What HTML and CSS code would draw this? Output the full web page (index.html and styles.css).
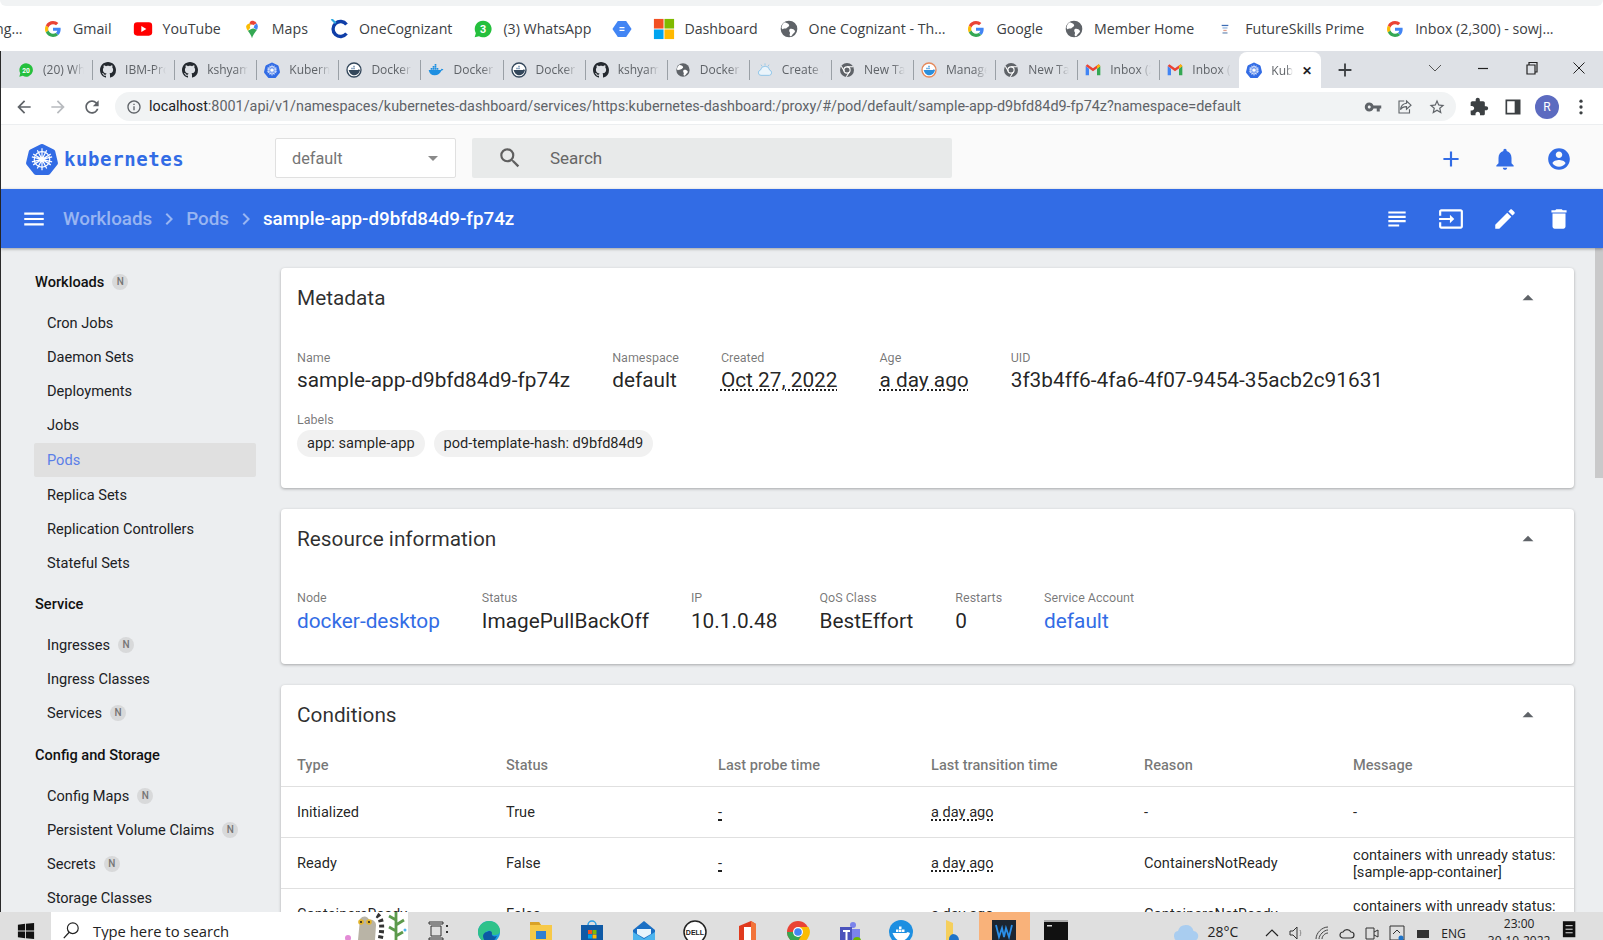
FILE: index.html
```html
<!DOCTYPE html>
<html lang="en">
<head>
    <meta charset="UTF-8">
    <meta name="viewport" content="width=device-width, initial-scale=1.0">
    <title>sample-app-d9bfd84d9-fp74z - Kubernetes Dashboard</title>
    <link rel="stylesheet" href="styles.css">
</head>
<body>
    <!-- shared icons -->
    <svg class="defs" aria-hidden="true">
        <symbol id="i-g" viewBox="0 0 48 48">
            <path fill="#EA4335" d="M24 9.5c3.54 0 6.71 1.22 9.21 3.6l6.85-6.85C35.9 2.38 30.47 0 24 0 14.62 0 6.51 5.38 2.56 13.22l7.98 6.19C12.43 13.72 17.74 9.5 24 9.5z"/>
            <path fill="#4285F4" d="M46.98 24.55c0-1.57-.15-3.09-.38-4.55H24v9.02h12.94c-.58 2.96-2.26 5.48-4.78 7.18l7.73 6c4.51-4.18 7.09-10.36 7.09-17.65z"/>
            <path fill="#FBBC05" d="M10.53 28.59c-.48-1.45-.76-2.99-.76-4.59s.27-3.14.76-4.59l-7.98-6.19C.92 16.46 0 20.12 0 24c0 3.88.92 7.54 2.56 10.78l7.97-6.19z"/>
            <path fill="#34A853" d="M24 48c6.48 0 11.93-2.13 15.89-5.81l-7.73-6c-2.15 1.45-4.92 2.3-8.16 2.3-6.26 0-11.57-4.22-13.47-9.91l-7.98 6.19C6.51 42.62 14.62 48 24 48z"/>
        </symbol>
        <symbol id="i-yt" viewBox="0 0 24 24">
            <rect x="1" y="4" width="22" height="16" rx="4" fill="#f00"/>
            <path fill="#fff" d="M10 8.5v7l6-3.5z"/>
        </symbol>
        <symbol id="i-maps" viewBox="0 0 24 24">
            <path fill="#34a853" d="M12 23c-1-4-3-6-5-9l6-3 5 2c-2 3-5 6-6 10z"/>
            <path fill="#fbbc04" d="M5 9c0 2 1 3.5 2 5l5-6-3-3C7 6 5 7 5 9z"/>
            <path fill="#4285f4" d="M19 9c0-1.5-.5-2.8-1.5-4L13 10l5 3c.6-1.2 1-2.5 1-4z"/>
            <path fill="#ea4335" d="M9 5l3.5 3 5-3C16.3 3 14.5 2 12 2 10.5 2 9.500 3.500 9 5z"/>
            <circle cx="12" cy="9" r="2.5" fill="#fff"/>
        </symbol>
        <symbol id="i-cog" viewBox="0 0 24 24">
            <path fill="none" stroke="#0f3ea8" stroke-width="4" d="M21 6.500a9 9 0 1 0 0 11"/>
            <path fill="none" stroke="#2ea8e0" stroke-width="2.500" d="M3 0l5 5"/>
        </symbol>
        <symbol id="i-wa" viewBox="0 0 24 24">
            <path fill="#25c03d" d="M12 2a10 10 0 0 0-8.600 15L2 22l5.200-1.400A10 10 0 1 0 12 2z"/>
        </symbol>
        <symbol id="i-hex" viewBox="0 0 24 24">
            <path fill="#4285f4" d="M7 2.500h10l6.500 9.500-6.500 9.500H7L.5 12z"/>
            <path fill="#fff" d="M9 9.500h6V11H9zM9 13h6v1.500H9z"/>
        </symbol>
        <symbol id="i-ms" viewBox="0 0 24 24">
            <path fill="#f25022" d="M1 1h10.500v10.500H1z"/>
            <path fill="#7fba00" d="M12.500 1H23v10.500H12.500z"/>
            <path fill="#00a4ef" d="M1 12.500h10.500V23H1z"/>
            <path fill="#ffb900" d="M12.500 12.500H23V23H12.500z"/>
        </symbol>
        <symbol id="i-globe" viewBox="0 0 24 24">
            <circle cx="12" cy="12" r="10" fill="#5f6368"/>
            <path fill="#fff" d="M7 4c2 1 4 1 5 3s-2 3-3 4-3 0-4 1-2-1-2-2c.5-2.500 2-5 4-6zM13 12c2-1 5 0 6 2s-2 3-3 5-2 2-3 1 1-3 0-4-1-3 0-4z"/>
        </symbol>
        <symbol id="i-fs" viewBox="0 0 24 24">
            <path fill="#3d6db5" d="M8 7h8v1.500H8z"/>
            <path fill="#8fb4de" d="M9 10h6v1.500H9z"/>
            <path fill="#e2a08e" d="M10 13h4v1.500h-4z"/>
            <path fill="#6f8fb7" d="M9 16h6v1.500H9z"/>
        </symbol>
        <symbol id="i-gh" viewBox="0 0 16 16">
            <path fill="#24292f" d="M8 0C3.58 0 0 3.58 0 8c0 3.54 2.29 6.53 5.47 7.59.4.07.55-.17.55-.38 0-.19-.01-.82-.01-1.49-2.01.37-2.53-.49-2.69-.94-.09-.23-.48-.94-.82-1.13-.28-.15-.68-.52-.01-.53.63-.01 1.08.58 1.23.82.72 1.21 1.87.87 2.33.66.07-.52.28-.87.51-1.07-1.78-.2-3.64-.89-3.64-3.95 0-.87.31-1.59.82-2.15-.08-.2-.36-1.02.08-2.12 0 0 .67-.21 2.2.82.64-.18 1.32-.27 2-.27.68 0 1.36.09 2 .27 1.53-1.04 2.2-.82 2.2-.82.44 1.1.16 1.92.08 2.12.51.56.82 1.27.82 2.15 0 3.07-1.87 3.75-3.65 3.95.29.25.54.73.54 1.48 0 1.07-.01 1.93-.01 2.2 0 .21.15.46.55.38A8.013 8.013 0 0016 8c0-4.42-3.58-8-8-8z"/>
        </symbol>
        <symbol id="i-k8s" viewBox="0 0 24 24">
            <path fill="#326ce5" d="M12 .8a2 2 0 0 1 .9.2l7.9 3.800a2 2 0 0 1 1.100 1.400l2 8.500a2 2 0 0 1-.4 1.700l-5.500 6.800a2 2 0 0 1-1.600.8H7.600a2 2 0 0 1-1.600-.8L.5 16.400a2 2 0 0 1-.4-1.700l2-8.500a2 2 0 0 1 1.100-1.400L11.100 1a2 2 0 0 1 .9-.2z"/>
            <g fill="none" stroke="#fff" stroke-width=".9">
                <circle cx="12" cy="12.300" r="5.800"/>
                <circle cx="12" cy="12.300" r="1.400" fill="#fff"/>
                <path d="M12 4v16.500M5.400 8.200l13.200 8.200M18.600 8.200L5.400 16.400M4.400 14.200l15.200-3.800M19.600 14.200L4.400 10.400M8.500 19.200l7-13.800M15.500 19.200l-7-13.800"/>
            </g>
        </symbol>
        <symbol id="i-whale" viewBox="0 0 24 24">
            <path fill="#1d8fe1" d="M1 12h17c1 0 2-1 2-2 1 0 2 .5 3 1-.5 1.500-2 2-3 2-1.500 4-5 7-10 7-5 0-8-3-9-8z"/>
            <path fill="#1d8fe1" d="M4 9h2.500v2.500H4zM7 9h2.500v2.500H7zM10 9h2.500v2.500H10zM13 9h2.500v2.500H13zM7 6h2.500v2.500H7zM10 6h2.500v2.500H10zM10 3h2.500v2.500H10z"/>
        </symbol>
        <symbol id="i-dockround" viewBox="0 0 24 24">
            <circle cx="12" cy="12" r="10.500" fill="#fff" stroke="#33475b" stroke-width="2"/>
            <path fill="#33475b" d="M4 12h14c.8 0 1-1 1-1l2 1c-1 5-5 8-9 8-4 0-7-4-8-8z"/>
            <path fill="#5b7fa5" d="M8 8.500h2V11H8zM11 8.500h2V11h-2zM11 5.500h2V8h-2z"/>
        </symbol>
        <symbol id="i-cloudy" viewBox="0 0 24 24">
            <path fill="#eaf4fb" stroke="#8cc4e8" stroke-width="1.400" d="M6 20a4 4 0 0 1-.8-7.900A7 7 0 0 1 19 12.200 4 4 0 0 1 18.500 20z"/>
            <path fill="none" stroke="#8cc4e8" stroke-width="1.200" d="M12 2v3M6 4l1.500 2.500M18 4l-1.500 2.500"/>
        </symbol>
        <symbol id="i-chrome" viewBox="0 0 24 24">
            <circle cx="12" cy="12" r="10.500" fill="#5f6368"/>
            <circle cx="12" cy="12" r="5.500" fill="#fff"/>
            <circle cx="12" cy="12" r="3.800" fill="#5f6368"/>
            <path stroke="#fff" stroke-width="1.600" d="M12 7h9M8 14L3.500 6.500M15.500 15L11 22"/>
        </symbol>
        <symbol id="i-manage" viewBox="0 0 24 24">
            <circle cx="12" cy="12" r="10.500" fill="#fff" stroke="#e58a5c" stroke-width="2"/>
            <path fill="#2a8fdd" d="M4 12h14c.8 0 1-1 1-1l2 1c-1 5-5 8-9 8-4 0-7-4-8-8z"/>
            <path fill="#2a8fdd" d="M8 8.500h2V11H8zM11 8.500h2V11h-2zM11 5.500h2V8h-2z"/>
        </symbol>
        <symbol id="i-gmail" viewBox="0 0 24 24">
            <path fill="#4285f4" d="M1 6v14h5V10z"/>
            <path fill="#34a853" d="M18 10v10h5V6z"/>
            <path fill="#ea4335" d="M1 6l11 8 11-8-2.500-2.500L12 9.500 3.500 3.500z"/>
            <path fill="#fbbc04" d="M20.500 3.500L23 6l-5 4V6z"/>
        </symbol>
        <symbol id="m-search" viewBox="0 0 24 24"><path d="M15.5 14h-.79l-.28-.27A6.471 6.471 0 0 0 16 9.5 6.500 6.500 0 1 0 9.500 16c1.610 0 3.090-.59 4.230-1.570l.27.28v.79l5 4.990L20.490 19l-4.990-5zm-6 0C7.010 14 5 11.990 5 9.500S7.010 5 9.500 5 14 7.010 14 9.500 11.990 14 9.500 14z"/></symbol>
        <symbol id="m-add" viewBox="0 0 24 24"><path d="M19 13h-6v6h-2v-6H5v-2h6V5h2v6h6v2z"/></symbol>
        <symbol id="m-bell" viewBox="0 0 24 24"><path d="M12 22c1.100 0 2-.9 2-2h-4c0 1.100.89 2 2 2zm6-6v-5c0-3.070-1.640-5.640-4.500-6.320V4c0-.83-.67-1.500-1.500-1.500s-1.500.67-1.500 1.500v.68C7.630 5.360 6 7.920 6 11v5l-2 2v1h16v-1l-2-2z"/></symbol>
        <symbol id="m-account" viewBox="0 0 24 24"><path d="M12 2C6.480 2 2 6.480 2 12s4.480 10 10 10 10-4.480 10-10S17.520 2 12 2zm0 3c1.660 0 3 1.340 3 3s-1.340 3-3 3-3-1.340-3-3 1.340-3 3-3zm0 14.200c-2.500 0-4.710-1.280-6-3.220.03-1.990 4-3.080 6-3.080 1.990 0 5.970 1.090 6 3.080-1.290 1.940-3.500 3.220-6 3.220z"/></symbol>
        <symbol id="m-menu" viewBox="0 0 24 24"><path d="M3 18h18v-2H3v2zm0-5h18v-2H3v2zm0-7v2h18V6H3z"/></symbol>
        <symbol id="m-chevron" viewBox="0 0 24 24"><path d="M10 6L8.590 7.410 13.170 12l-4.580 4.590L10 18l6-6z"/></symbol>
        <symbol id="m-logs" viewBox="0 0 24 24"><path d="M14 17H4v2h10v-2zm6-8H4v2h16V9zM4 15h16v-2H4v2zM4 5v2h16V5H4z"/></symbol>
        <symbol id="m-exec" viewBox="0 0 24 24"><path d="M21 3.010H3c-1.100 0-2 .9-2 2V9h2V4.990h18v14.030H3V15H1v4.010c0 1.100.9 1.980 2 1.980h18c1.100 0 2-.88 2-1.980v-14c0-1.110-.9-2-2-2zM11 16l4-4-4-4v3H1v2h10v3z"/></symbol>
        <symbol id="m-edit" viewBox="0 0 24 24"><path d="M3 17.250V21h3.750L17.810 9.940l-3.750-3.750L3 17.250zM20.710 7.040c.39-.39.39-1.020 0-1.410l-2.340-2.340c-.39-.39-1.020-.39-1.410 0l-1.830 1.830 3.750 3.750 1.830-1.830z"/></symbol>
        <symbol id="m-delete" viewBox="0 0 24 24"><path d="M6 19c0 1.100.9 2 2 2h8c1.100 0 2-.9 2-2V7H6v12zM19 4h-3.500l-1-1h-5l-1 1H5v2h14V4z"/></symbol>
        <symbol id="m-up" viewBox="0 0 24 24"><path d="M7 14l5-5 5 5z"/></symbol>
        <symbol id="m-down" viewBox="0 0 24 24"><path d="M7 10l5 5 5-5z"/></symbol>
        <symbol id="m-back" viewBox="0 0 24 24"><path d="M20 11H7.830l5.590-5.590L12 4l-8 8 8 8 1.410-1.410L7.830 13H20v-2z"/></symbol>
        <symbol id="m-forward" viewBox="0 0 24 24"><path d="M12 4l-1.410 1.410L16.170 11H4v2h12.170l-5.580 5.590L12 20l8-8z"/></symbol>
        <symbol id="m-reload" viewBox="0 0 24 24"><path d="M17.650 6.350C16.200 4.900 14.350 4 12 4c-4.420 0-7.990 3.580-7.990 8s3.570 8 7.990 8c3.730 0 6.840-2.550 7.730-6h-2.080c-.82 2.330-3.040 4-5.650 4-3.310 0-6-2.690-6-6s2.690-6 6-6c1.660 0 3.140.69 4.220 1.780L13 11h7V4l-2.350 2.350z"/></symbol>
        <symbol id="m-info" viewBox="0 0 24 24"><path d="M11 7h2v2h-2zm0 4h2v6h-2zm1-9C6.480 2 2 6.480 2 12s4.480 10 10 10 10-4.480 10-10S17.520 2 12 2zm0 18c-4.410 0-8-3.590-8-8s3.590-8 8-8 8 3.590 8 8-3.590 8-8 8z"/></symbol>
        <symbol id="m-key" viewBox="0 0 24 24"><path d="M12.650 10C11.830 7.670 9.610 6 7 6c-3.310 0-6 2.690-6 6s2.690 6 6 6c2.610 0 4.830-1.670 5.650-4H17v4h4v-4h2v-4H12.650zM7 14c-1.100 0-2-.9-2-2s.9-2 2-2 2 .9 2 2-.9 2-2 2z"/></symbol>
        <symbol id="m-star" viewBox="0 0 24 24"><path d="M22 9.240l-7.190-.62L12 2 9.190 8.630 2 9.240l5.460 4.730L5.820 21 12 17.270 18.180 21l-1.630-7.030L22 9.240zM12 15.400l-3.760 2.270 1-4.280-3.320-2.880 4.380-.38L12 6.100l1.710 4.040 4.380.38-3.320 2.880 1 4.280L12 15.400z"/></symbol>
        <symbol id="m-ext" viewBox="0 0 24 24"><path d="M20.500 11H19V7c0-1.100-.9-2-2-2h-4V3.500C13 2.120 11.880 1 10.500 1S8 2.120 8 3.500V5H4c-1.100 0-1.990.9-1.990 2v3.800H3.500c1.490 0 2.700 1.210 2.700 2.700s-1.210 2.700-2.700 2.700H2V20c0 1.100.9 2 2 2h3.800v-1.500c0-1.490 1.210-2.700 2.700-2.700 1.490 0 2.700 1.210 2.700 2.700V22H17c1.100 0 2-.9 2-2v-4h1.500c1.380 0 2.500-1.120 2.500-2.500S21.880 11 20.500 11z"/></symbol>
        <symbol id="m-share" viewBox="0 0 24 24"><path fill="none" stroke="currentColor" stroke-width="1.500" d="M14 4l6 5.500-6 5.500v-3.500c-4 0-6.500 1.500-8 4 .5-4.500 3-8 8-8.500zM11 4H4v16h14v-5"/></symbol>
        <symbol id="m-panel" viewBox="0 0 24 24"><path d="M3 3h18v18H3zm2 2v14h9V5z" fill-rule="evenodd"/></symbol>
        <symbol id="m-dots" viewBox="0 0 24 24"><circle cx="12" cy="5" r="2"/><circle cx="12" cy="12" r="2"/><circle cx="12" cy="19" r="2"/></symbol>
    </svg>

    <div class="top-strip"><div class="top-strip-round"></div></div>

    <div class="bookmarks">
        <span class="bm-cut">ng...</span>
        <a class="bm"><svg class="bm-icon bm-g"><use href="#i-g"/></svg>Gmail</a>
        <a class="bm"><svg class="bm-icon"><use href="#i-yt"/></svg>YouTube</a>
        <a class="bm"><svg class="bm-icon"><use href="#i-maps"/></svg>Maps</a>
        <a class="bm"><svg class="bm-icon"><use href="#i-cog"/></svg>OneCognizant</a>
        <a class="bm"><svg class="bm-icon" viewBox="0 0 24 24"><use href="#i-wa"/><text class="icon-num" x="12" y="17" font-size="13">3</text></svg>(3) WhatsApp</a>
        <a class="bm bm-empty"><svg class="bm-icon"><use href="#i-hex"/></svg></a>
        <a class="bm"><svg class="bm-icon bm-ms"><use href="#i-ms"/></svg>Dashboard</a>
        <a class="bm"><svg class="bm-icon"><use href="#i-globe"/></svg>One Cognizant - Th...</a>
        <a class="bm"><svg class="bm-icon bm-g"><use href="#i-g"/></svg>Google</a>
        <a class="bm"><svg class="bm-icon"><use href="#i-globe"/></svg>Member Home</a>
        <a class="bm"><svg class="bm-icon"><use href="#i-fs"/></svg>FutureSkills Prime</a>
        <a class="bm"><svg class="bm-icon bm-g"><use href="#i-g"/></svg>Inbox (2,300) - sowj...</a>
    </div>

    <div class="window">
        <div class="tabstrip">
            <div class="tab"><svg class="tab-icon" viewBox="0 0 24 24"><use href="#i-wa"/><text class="icon-num" x="12" y="16" font-size="10">20</text></svg><span class="tab-text">(20) WhatsApp</span></div>
            <div class="tab"><svg class="tab-icon"><use href="#i-gh"/></svg><span class="tab-text">IBM-Project</span></div>
            <div class="tab"><svg class="tab-icon"><use href="#i-gh"/></svg><span class="tab-text">kshyamsundar</span></div>
            <div class="tab"><svg class="tab-icon"><use href="#i-k8s"/></svg><span class="tab-text">Kubernetes</span></div>
            <div class="tab"><svg class="tab-icon"><use href="#i-dockround"/></svg><span class="tab-text">Docker Hub</span></div>
            <div class="tab"><svg class="tab-icon"><use href="#i-whale"/></svg><span class="tab-text">Docker Hub</span></div>
            <div class="tab"><svg class="tab-icon"><use href="#i-dockround"/></svg><span class="tab-text">Docker Hub</span></div>
            <div class="tab"><svg class="tab-icon"><use href="#i-gh"/></svg><span class="tab-text">kshyamsundar</span></div>
            <div class="tab"><svg class="tab-icon"><use href="#i-globe"/></svg><span class="tab-text">Docker Hub</span></div>
            <div class="tab"><svg class="tab-icon"><use href="#i-cloudy"/></svg><span class="tab-text">Create a</span></div>
            <div class="tab"><svg class="tab-icon"><use href="#i-chrome"/></svg><span class="tab-text">New Tab</span></div>
            <div class="tab"><svg class="tab-icon"><use href="#i-manage"/></svg><span class="tab-text">Manage</span></div>
            <div class="tab"><svg class="tab-icon"><use href="#i-chrome"/></svg><span class="tab-text">New Tab</span></div>
            <div class="tab"><svg class="tab-icon"><use href="#i-gmail"/></svg><span class="tab-text">Inbox (2,300)</span></div>
            <div class="tab tab-last"><svg class="tab-icon"><use href="#i-gmail"/></svg><span class="tab-text">Inbox (2,300)</span></div>
            <div class="tab tab-active"><svg class="tab-icon"><use href="#i-k8s"/></svg><span class="tab-text">Kubernetes</span><span class="tab-close">✕</span></div>
            <svg class="tab-new"><use href="#m-add"/></svg>
            <div class="win-controls">
                <svg class="win-btn" viewBox="0 0 48 24"><path d="M18 9l6 6 6-6" fill="none" stroke="#555" stroke-width="1"/></svg>
                <svg class="win-btn" viewBox="0 0 48 24"><path d="M19 12.500h10" stroke="#222" stroke-width="1.200"/></svg>
                <svg class="win-btn" viewBox="0 0 48 24"><path d="M20 9h8v9h-8zM22 9V6.500h8V16h-2" fill="none" stroke="#222" stroke-width="1.200"/></svg>
                <svg class="win-btn" viewBox="0 0 48 24"><path d="M18.500 6.500l11 11M29.500 6.500l-11 11" stroke="#222" stroke-width="1"/></svg>
            </div>
        </div>

        <div class="addressbar">
            <svg class="nav-btn"><use href="#m-back"/></svg>
            <svg class="nav-btn nav-off"><use href="#m-forward"/></svg>
            <svg class="nav-btn"><use href="#m-reload"/></svg>
            <div class="omnibox">
                <svg class="omni-info"><use href="#m-info"/></svg>
                <span class="url"><span class="url-host">localhost</span>:8001/api/v1/namespaces/kubernetes-dashboard/services/https:kubernetes-dashboard:/proxy/#/pod/default/sample-app-d9bfd84d9-fp74z?namespace=default</span>
                <svg class="omni-btn"><use href="#m-key"/></svg>
                <svg class="omni-btn"><use href="#m-share"/></svg>
                <svg class="omni-btn"><use href="#m-star"/></svg>
            </div>
            <svg class="ext-btn"><use href="#m-ext"/></svg>
            <svg class="ext-btn"><use href="#m-panel"/></svg>
            <span class="avatar">R</span>
            <svg class="ext-btn"><use href="#m-dots"/></svg>
        </div>

        <header class="toolbar">
            <div class="logo">
                <svg class="logo-mark"><use href="#i-k8s"/></svg>
                <span class="logo-text">kubernetes</span>
            </div>
            <div class="ns-select">
                <span>default</span>
                <svg class="ns-arrow"><use href="#m-down"/></svg>
            </div>
            <div class="search">
                <svg class="search-icon"><use href="#m-search"/></svg>
                <span>Search</span>
            </div>
            <div class="actions actions-blue">
                <svg class="action"><use href="#m-add"/></svg>
                <svg class="action"><use href="#m-bell"/></svg>
                <svg class="action"><use href="#m-account"/></svg>
            </div>
        </header>

        <div class="crumbbar">
            <svg class="crumb-menu"><use href="#m-menu"/></svg>
            <span class="crumb">Workloads</span>
            <svg class="crumb-sep"><use href="#m-chevron"/></svg>
            <span class="crumb">Pods</span>
            <svg class="crumb-sep"><use href="#m-chevron"/></svg>
            <span class="crumb crumb-current">sample-app-d9bfd84d9-fp74z</span>
            <div class="actions actions-white">
                <svg class="action"><use href="#m-logs"/></svg>
                <svg class="action"><use href="#m-exec"/></svg>
                <svg class="action"><use href="#m-edit"/></svg>
                <svg class="action"><use href="#m-delete"/></svg>
            </div>
        </div>

        <main class="main">
            <nav class="sidebar">
                <div class="nav-head">Workloads <span class="badge">N</span></div>
                <a class="nav-item">Cron Jobs</a>
                <a class="nav-item">Daemon Sets</a>
                <a class="nav-item">Deployments</a>
                <a class="nav-item">Jobs</a>
                <a class="nav-item nav-active">Pods</a>
                <a class="nav-item">Replica Sets</a>
                <a class="nav-item">Replication Controllers</a>
                <a class="nav-item">Stateful Sets</a>

                <div class="nav-head">Service</div>
                <a class="nav-item">Ingresses <span class="badge">N</span></a>
                <a class="nav-item">Ingress Classes</a>
                <a class="nav-item">Services <span class="badge">N</span></a>

                <div class="nav-head">Config and Storage</div>
                <a class="nav-item">Config Maps <span class="badge">N</span></a>
                <a class="nav-item">Persistent Volume Claims <span class="badge">N</span></a>
                <a class="nav-item">Secrets <span class="badge">N</span></a>
                <a class="nav-item">Storage Classes</a>
            </nav>

            <section class="content">
                <div class="card">
                    <div class="card-head">
                        <span>Metadata</span>
                        <svg class="card-toggle"><use href="#m-up"/></svg>
                    </div>
                    <div class="card-body">
                        <div class="fields">
                            <div class="field"><div class="field-label">Name</div><div class="field-value">sample-app-d9bfd84d9-fp74z</div></div>
                            <div class="field"><div class="field-label">Namespace</div><div class="field-value">default</div></div>
                            <div class="field"><div class="field-label">Created</div><div class="field-value"><span class="dotted">Oct 27, 2022</span></div></div>
                            <div class="field"><div class="field-label">Age</div><div class="field-value"><span class="dotted">a day ago</span></div></div>
                            <div class="field"><div class="field-label">UID</div><div class="field-value">3f3b4ff6-4fa6-4f07-9454-35acb2c91631</div></div>
                        </div>
                        <div class="field-label labels-label">Labels</div>
                        <div class="chips">
                            <span class="chip">app: sample-app</span>
                            <span class="chip">pod-template-hash: d9bfd84d9</span>
                        </div>
                    </div>
                </div>

                <div class="card">
                    <div class="card-head">
                        <span>Resource information</span>
                        <svg class="card-toggle"><use href="#m-up"/></svg>
                    </div>
                    <div class="card-body card-body-info">
                        <div class="fields">
                            <div class="field"><div class="field-label">Node</div><div class="field-value link">docker-desktop</div></div>
                            <div class="field"><div class="field-label">Status</div><div class="field-value">ImagePullBackOff</div></div>
                            <div class="field"><div class="field-label">IP</div><div class="field-value">10.1.0.48</div></div>
                            <div class="field"><div class="field-label">QoS Class</div><div class="field-value">BestEffort</div></div>
                            <div class="field"><div class="field-label">Restarts</div><div class="field-value">0</div></div>
                            <div class="field"><div class="field-label">Service Account</div><div class="field-value link">default</div></div>
                        </div>
                    </div>
                </div>

                <div class="card">
                    <div class="card-head">
                        <span>Conditions</span>
                        <svg class="card-toggle"><use href="#m-up"/></svg>
                    </div>
                    <table class="conditions">
                        <thead>
                            <tr><th>Type</th><th>Status</th><th>Last probe time</th><th>Last transition time</th><th>Reason</th><th>Message</th></tr>
                        </thead>
                        <tbody>
                            <tr><td>Initialized</td><td>True</td><td><span class="dotted">-</span></td><td><span class="dotted">a day ago</span></td><td>-</td><td>-</td></tr>
                            <tr><td>Ready</td><td>False</td><td><span class="dotted">-</span></td><td><span class="dotted">a day ago</span></td><td>ContainersNotReady</td><td>containers with unready status: [sample-app-container]</td></tr>
                            <tr><td>ContainersReady</td><td>False</td><td><span class="dotted">-</span></td><td><span class="dotted">a day ago</span></td><td>ContainersNotReady</td><td>containers with unready status: [sample-app-container]</td></tr>
                        </tbody>
                    </table>
                </div>
            </section>

            <div class="scrollbar"><div class="scroll-thumb"></div></div>
        </main>
    </div>

    <footer class="taskbar">
        <svg class="start" viewBox="0 0 20 20"><path fill="#111" d="M1 3l8-1v7.500H1zM10 2l9-1v8.500h-9zM1 10.500h8V18l-8-1zM10 10.500h9V19l-9-1z"/></svg>
        <div class="tb-search">
            <svg class="tb-search-icon" viewBox="0 0 20 20"><circle cx="12" cy="8" r="6" fill="none" stroke="#222" stroke-width="1.300"/><path d="M8 12.500L2 19" stroke="#222" stroke-width="1.400"/></svg>
            <span>Type here to search</span>
            <svg class="tb-lemur" viewBox="0 0 68 28">
                <path d="M20 7c3-4 8-3 9 1 3-1 7 1 7 5l-1 15H18z" fill="#b9b4a6"/>
                <circle cx="21" cy="10" r="2.800" fill="#e3b52c"/><circle cx="29" cy="10" r="2.800" fill="#e3b52c"/>
                <circle cx="21" cy="10" r="1.100" fill="#222"/><circle cx="29" cy="10" r="1.100" fill="#222"/>
                <path d="M37 3c5 3 6 13 3 25" fill="none" stroke="#333" stroke-width="5" stroke-dasharray="3 2.500"/>
                <path d="M56 0v28M56 8l-7-4M56 13l8-5M56 19l-7-4M56 24l7-4" stroke="#5c9a4c" stroke-width="2.800" fill="none"/>
                <circle cx="8" cy="26" r="3" fill="#e38bd6"/>
                <circle cx="65" cy="18" r="1.500" fill="#4cb4ee"/>
            </svg>
        </div>
        <div class="tb-apps">
            <div class="tb-app"><svg viewBox="0 0 24 24"><path d="M3 2h14v2H3zM5 6h10v10H5zM3 18h14v2H3z" fill="none" stroke="#333" stroke-width="1"/><path d="M20 5h2v2h-2zM20 11h2v2h-2z" fill="#333"/></svg></div>
            <div class="tb-app"><svg viewBox="0 0 24 24"><circle cx="12" cy="12" r="11" fill="#1b9de2"/><path d="M12 1c6 0 11 4 11 10 0 3-3 4-6 4-3 0-4-2-3-4-3-1-7 1-7 5 0 3 2 6 5 7C6 23 1 18 1 12 1 6 6 1 12 1z" fill="#2fc28a"/><path d="M10 12c2-2 5-1 5 1-1 3 2 4 5 3-1 2-4 7-9 7-3-1-5-4-5-7 0-2 2-4 4-4z" fill="#0c59a4"/></svg></div>
            <div class="tb-app"><svg viewBox="0 0 24 24"><path d="M1 2h9l2 3h11v19H1z" fill="#f7c948"/><path d="M1 2h9l2 3H1z" fill="#d9a227"/><path d="M7 11h10v8H7z" fill="#2f7fd1"/></svg></div>
            <div class="tb-app"><svg viewBox="0 0 24 24"><path d="M8 5a4 4 0 0 1 8 0" fill="none" stroke="#2b9fe6" stroke-width="1.500"/><path d="M1 5h22v19H1z" fill="#0f5aa6"/><path d="M8 10h4v4H8z" fill="#f25022"/><path d="M12.500 10h4v4h-4z" fill="#7fba00"/><path d="M8 14.500h4v4H8z" fill="#00a4ef"/><path d="M12.500 14.500h4v4h-4z" fill="#ffb900"/></svg></div>
            <div class="tb-app"><svg viewBox="0 0 24 24"><path d="M12 1l11 9v14H1V10z" fill="#1a6fc4"/><path d="M1 12l11 7 11-7v12H1z" fill="#4cb4ee"/><path d="M5 9h14v5l-7 4-7-4z" fill="#e8f4fc"/></svg></div>
            <div class="tb-app"><svg viewBox="0 0 24 24"><circle cx="12" cy="12" r="11" fill="#fff" stroke="#222" stroke-width="1.500"/><text class="icon-dell" x="12" y="14.500" font-size="7">DELL</text></svg></div>
            <div class="tb-app"><svg viewBox="0 0 24 24"><path d="M4 6l12-5 5 3v19H7l-3-3z" fill="#e03a1e"/><path d="M9 7h8v13H9z" fill="#fff"/><path d="M16 1l5 3v19h-5z" fill="#f2743a"/></svg></div>
            <div class="tb-app"><svg viewBox="0 0 24 24"><circle cx="12" cy="12" r="11" fill="#ea4335"/><path d="M1 12a11 11 0 0 0 10 11l6-10-10-1z" fill="#34a853"/><path d="M12 7h10.500A11 11 0 0 1 11 23l6-10z" fill="#fbbc04"/><circle cx="12" cy="12" r="5" fill="#fff"/><circle cx="12" cy="12" r="3.800" fill="#4285f4"/></svg></div>
            <div class="tb-app"><svg viewBox="0 0 24 24"><circle cx="15" cy="5" r="3" fill="#7b83eb"/><path d="M11 9h11v15H11z" fill="#7b83eb"/><path d="M2 7h12v17H2z" fill="#4b53bc"/><path d="M5 10h7v2H9.500v8h-2v-8H5z" fill="#fff"/><circle cx="19" cy="21" r="4" fill="#6bb700"/></svg></div>
            <div class="tb-app"><svg viewBox="0 0 24 24"><circle cx="12" cy="12" r="12" fill="#1d8fe1"/><path d="M3 13h14c1 0 1.500-1 1.500-1l2.500 1c-1 4-5 8-9 8-4 0-7-4-8.500-8z" fill="#fff"/><path d="M7 9.500h2.500V12H7zM10 9.500h2.500V12H10zM13 9.500h2.500V12H13zM10 6.500h2.500V9H10z" fill="#fff"/></svg></div>
            <div class="tb-app"><svg viewBox="0 0 24 24"><path d="M5 0l7 3v21H5z" fill="#f5cf5c"/><path d="M12 14a6 6 0 0 1 6 6v4H8v-4a6 6 0 0 1 4-6z" fill="#1f74c9"/></svg></div>
            <div class="tb-app tb-app-on"><svg viewBox="0 0 24 24"><path d="M0 0h24v24H0z" fill="#1c2530"/><path d="M4 5l3 12 3-9 2 9 2-9 3 9 3-12" fill="none" stroke="#2b8fe8" stroke-width="1.800"/></svg></div>
            <div class="tb-app"><svg viewBox="0 0 24 24"><path d="M0 0h24v24H0z" fill="#111"/><path d="M0 0h24v2H0z" fill="#aaa"/><path d="M3 5h5v1.500H3z" fill="#ddd"/></svg></div>
        </div>
        <div class="tray">
            <svg class="tray-cloud" viewBox="0 0 26 18"><path d="M6 18a5 5 0 0 1-1-9.900A8 8 0 0 1 20.500 8 5 5 0 0 1 20 18z" fill="#a9cdf0"/></svg>
            <span class="tray-temp">28°C</span>
            <svg class="tray-icon tray-caret" viewBox="0 0 16 16"><path d="M2 11l6-6 6 6" fill="none" stroke="#222" stroke-width="1.200"/></svg>
            <svg class="tray-icon" viewBox="0 0 16 16"><path d="M1 6h3l4-4v12l-4-4H1z" fill="none" stroke="#333"/><path d="M11 5c1 2 1 4 0 6" fill="none" stroke="#888"/></svg>
            <svg class="tray-icon" viewBox="0 0 16 16"><path d="M2 14C2 8 8 2 14 2M5 14c0-4 5-9 9-9M8 14c0-3 3-6 6-6" fill="none" stroke="#444"/></svg>
            <svg class="tray-icon" viewBox="0 0 16 16"><path d="M4 13a3 3 0 0 1 0-6 4.500 4.500 0 0 1 8 0 3 3 0 0 1 0 6z" fill="none" stroke="#333" stroke-width="1.200"/></svg>
            <svg class="tray-icon" viewBox="0 0 16 16"><path d="M2 3h8v11H2zM10 7l4-2v7l-4-2" fill="none" stroke="#333"/></svg>
            <svg class="tray-icon" viewBox="0 0 16 16"><path d="M1 1h14v14H1z" fill="none" stroke="#333"/><path d="M4 9l4-4 3 3" fill="none" stroke="#333"/><circle cx="12" cy="13" r="2.500" fill="#1f74c9"/></svg>
            <svg class="tray-icon" viewBox="0 0 16 16"><path d="M1 4l2 1v8h12V5H3" fill="#333"/></svg>
            <span class="tray-lang">ENG</span>
            <div class="tray-clock"><div>23:00</div><div>30-10-2022</div></div>
            <svg class="tray-notify" viewBox="0 0 18 22"><path d="M1 0h14v18H1z" fill="#111"/><path d="M4 5h8M4 9h8M4 13h8" stroke="#fff"/></svg>
        </div>
    </footer>
</body>
</html>
```

FILE: styles.css
```css
html, body {
    margin: 0;
    height: 940px;
    overflow: hidden;
}

body {
    display: flex;
    flex-direction: column;
    font-family: Roboto, sans-serif;
    color: rgba(0, 0, 0, 0.87);
    background: #fff;
}

.defs {
    display: none;
}

svg {
    display: block;
    fill: currentColor;
    flex: none;
}

.icon-num {
    fill: #fff;
    font-family: Roboto, sans-serif;
    font-weight: 700;
    text-anchor: middle;
}

.icon-dell {
    fill: #222;
    font-family: "Liberation Sans", sans-serif;
    font-weight: 700;
    text-anchor: middle;
}

/* browser chrome */
.top-strip {
    height: 6px;
    background: #fff;
    flex: none;
}

.top-strip-round {
    height: 6px;
    background: #f1f3f4;
    border-radius: 0 0 8px 8px;
}

.bookmarks {
    height: 45px;
    flex: none;
    display: flex;
    align-items: center;
    gap: 21px;
    font-family: "Open Sans", sans-serif;
    font-size: 14.2px;
    color: #3c4043;
    white-space: nowrap;
    overflow: hidden;
}

.bm-cut {
    width: 22px;
    text-indent: -5px;
    overflow: hidden;
}

.bm {
    display: flex;
    align-items: center;
    gap: 10px;
}

.bm-icon {
    width: 20px;
    height: 20px;
}

.bm-g {
    width: 16px;
    height: 16px;
    padding: 2px;
}

.bm-ms {
    width: 22px;
    height: 22px;
    margin-right: -1px;
}

.window {
    flex: 1;
    min-height: 0;
    display: flex;
    flex-direction: column;
    border-left: 1px solid #2a2a2a;
}

.tabstrip {
    height: 37px;
    flex: none;
    display: flex;
    align-items: center;
    padding-left: 10px;
    background: #dee1e6;
}

.tab {
    width: 82.1px;
    height: 20px;
    box-sizing: border-box;
    display: flex;
    align-items: center;
    gap: 9px;
    padding: 0 8px 0 7px;
    border-right: 1px solid #9aa0a6;
    font-family: "Open Sans", sans-serif;
    font-size: 12px;
    color: #5f6368;
    white-space: nowrap;
}

.tab-last {
    width: 79px;
    border-right: none;
}

.tab-icon {
    width: 16px;
    height: 16px;
}

.tab-text {
    flex: 1;
    min-width: 0;
    overflow: hidden;
    -webkit-mask-image: linear-gradient(90deg, #000 70%, transparent);
    mask-image: linear-gradient(90deg, #000 70%, transparent);
}

.tab-active {
    height: 36px;
    width: 82px;
    align-self: flex-end;
    padding-right: 9px;
    background: #fff;
    border-right: none;
    border-radius: 8px 8px 0 0;
}

.tab-close {
    font-size: 12px;
    font-weight: 700;
    color: #202124;
}

.tab-new {
    width: 22px;
    height: 22px;
    margin-left: 13px;
    color: #3c4043;
}

.win-controls {
    margin-left: auto;
    display: flex;
    align-self: flex-start;
    padding-top: 5px;
}

.win-btn {
    width: 48px;
    height: 24px;
}

.addressbar {
    height: 37px;
    flex: none;
    display: flex;
    align-items: center;
    padding: 1px 0 0 6px;
    background: #fff;
    border-bottom: 1px solid #eceef0;
    box-sizing: border-box;
    color: #5f6368;
}

.nav-btn {
    width: 20px;
    height: 20px;
    padding: 0 7px;
}

.nav-off {
    color: #b8bbbf;
}

.omnibox {
    width: 1341px;
    height: 29px;
    margin-left: 6px;
    display: flex;
    align-items: center;
    box-sizing: border-box;
    padding-left: 11px;
    padding-right: 3px;
    border-radius: 15px;
    background: #f1f3f4;
    font-size: 14.4px;
    white-space: nowrap;
}

.omni-info {
    width: 16px;
    height: 16px;
}

.url {
    flex: 1;
    margin-left: 7px;
    overflow: hidden;
    color: #5f6368;
}

.url-host {
    color: #202124;
}

.omni-btn {
    width: 18px;
    height: 18px;
    padding: 0 7px;
}

.ext-btn {
    width: 20px;
    height: 20px;
    padding: 0 7px;
    color: #3c4043;
}

.addressbar .omnibox + .ext-btn {
    margin-left: 6px;
}

.avatar {
    width: 24px;
    height: 24px;
    margin: 0 5px;
    border-radius: 50%;
    background: #5c6bc0;
    color: #fff;
    font-size: 12px;
    line-height: 24px;
    text-align: center;
}

/* dashboard toolbar */
.toolbar {
    height: 64px;
    flex: none;
    box-sizing: border-box;
    padding-top: 2px;
    display: flex;
    align-items: center;
    background: #fafafa;
}

.logo {
    width: 249px;
    padding-left: 25px;
    padding-top: 1px;
    box-sizing: border-box;
    display: flex;
    align-items: center;
    gap: 6px;
}

.logo-mark {
    width: 32px;
    height: 32px;
}

.logo-text {
    font-family: "DejaVu Sans Mono", monospace;
    font-size: 19px;
    font-weight: 700;
    letter-spacing: 0.6px;
    color: #326ce5;
}

.ns-select {
    width: 181px;
    height: 40px;
    margin-left: 25px;
    box-sizing: border-box;
    display: flex;
    align-items: center;
    justify-content: space-between;
    padding: 0 10px 0 16px;
    background: #fff;
    border: 1px solid #e0e0e0;
    border-radius: 2px;
    font-size: 16.3px;
    color: #757575;
}

.ns-arrow {
    width: 24px;
    height: 24px;
    color: #8a8a8a;
}

.search {
    width: 480px;
    height: 40px;
    margin-left: 16px;
    box-sizing: border-box;
    display: flex;
    align-items: center;
    gap: 27px;
    padding-left: 25px;
    background: #e8eaea;
    border-radius: 2px;
    font-size: 17px;
    color: #666;
}

.search-icon {
    width: 26px;
    height: 26px;
    color: #5f5f5f;
}

.actions {
    margin-left: auto;
    margin-right: 17px;
    display: flex;
}

.actions-blue {
    color: #326ce5;
    padding-top: 1px;
}

.actions-white {
    color: #fff;
}

.action {
    width: 26px;
    height: 26px;
    padding: 0 14px;
}

.crumbbar {
    height: 59px;
    flex: none;
    box-sizing: border-box;
    padding-top: 1px;
    display: flex;
    align-items: center;
    background: #326ce5;
    box-shadow: 0 1px 3px rgba(0, 0, 0, 0.35);
    position: relative;
    font-size: 18.8px;
    font-weight: 500;
    color: rgba(255, 255, 255, 0.5);
}

.crumb-menu {
    width: 26px;
    height: 26px;
    margin-left: 20px;
    margin-right: 16px;
    color: #fff;
}

.crumb-sep {
    width: 24px;
    height: 24px;
    margin: 0 5px;
}

.crumb-current {
    color: #fff;
}

/* page body */
.main {
    flex: 1;
    min-height: 0;
    display: flex;
    overflow: hidden;
    background: #eceef0;
}

.sidebar {
    width: 280px;
    flex: none;
    padding: 17px 0 0 33px;
    box-sizing: border-box;
    font-size: 14.6px;
}

.nav-head {
    height: 34px;
    margin: 7.5px 0 7px 1px;
    display: flex;
    align-items: center;
    gap: 8px;
    font-weight: 500;
    color: #111;
}

.nav-head:first-child {
    margin-top: 0;
}

.nav-item {
    width: 222px;
    height: 34.1px;
    box-sizing: border-box;
    display: flex;
    align-items: center;
    gap: 8px;
    padding-left: 13px;
    white-space: nowrap;
    color: #202124;
    border-radius: 2px;
}

.nav-active {
    margin-top: 1px;
    background: #e0e0e0;
    color: #5b7fe8;
}

.badge {
    width: 16px;
    height: 16px;
    border-radius: 50%;
    background: #d8d9da;
    color: #757575;
    font-size: 10px;
    font-weight: 500;
    line-height: 16px;
    text-align: center;
}

.content {
    flex: 1;
    min-width: 0;
    padding: 20px 21px 0 0;
    display: flex;
    flex-direction: column;
    gap: 21px;
}

.scrollbar {
    width: 8px;
    flex: none;
}

.scroll-thumb {
    height: 230px;
    background: #c9c9ca;
}

.card {
    flex: none;
    background: #fff;
    border-radius: 4px;
    box-shadow: 0 1px 3px rgba(0, 0, 0, 0.3);
}

.card-head {
    height: 58px;
    display: flex;
    align-items: center;
    justify-content: space-between;
    padding: 2px 33px 0 16px;
    box-sizing: border-box;
    font-size: 20.8px;
    color: rgba(0, 0, 0, 0.82);
}

.card-toggle {
    width: 26px;
    height: 26px;
    color: #5f6368;
}

.card-body {
    padding: 24px 16px 31px;
}

.card-body-info {
    padding: 23px 16px 30px;
}

.fields {
    display: flex;
    gap: 42px;
}

.field-label {
    font-size: 12.5px;
    line-height: 16px;
    color: rgba(0, 0, 0, 0.54);
    white-space: nowrap;
}

.field-value {
    font-size: 20.8px;
    line-height: 28px;
    white-space: nowrap;
}

.card-body-info .field-value {
    padding-top: 1px;
    margin-bottom: -1px;
}

.link {
    color: #326ce5;
}

.dotted {
    text-decoration: underline dotted 2px;
    text-underline-offset: 2px;
}

.labels-label {
    margin-top: 18px;
}

.chips {
    display: flex;
    gap: 9px;
    margin-top: 2px;
}

.chip {
    height: 27px;
    padding: 0 10px;
    border-radius: 14px;
    background: #f1f1f1;
    font-size: 14.6px;
    line-height: 27px;
}

.conditions {
    width: 100%;
    margin-top: 1px;
    table-layout: fixed;
    border-collapse: collapse;
    font-size: 14.6px;
}

.conditions th,
.conditions td {
    padding: 2px 8px 0 16px;
    text-align: left;
    box-sizing: border-box;
    line-height: 17px;
    font-weight: 400;
    border-bottom: 1px solid #e0e0e0;
}

.conditions th {
    height: 42px;
    font-weight: 500;
    color: rgba(0, 0, 0, 0.54);
}

.conditions td {
    height: 51px;
}

.conditions th:nth-child(1) { width: 209px; }
.conditions th:nth-child(2) { width: 212px; }
.conditions th:nth-child(3) { width: 213px; }
.conditions th:nth-child(4) { width: 213px; }
.conditions th:nth-child(5) { width: 209px; }

/* windows taskbar */
.taskbar {
    height: 28px;
    flex: none;
    display: flex;
    align-items: flex-start;
    overflow: hidden;
    background: #dfdfdf;
    font-family: "Open Sans", sans-serif;
    color: #222;
    position: relative;
}

.start {
    width: 18px;
    height: 18px;
    margin: 10px 16px 0 17px;
}

.tb-search {
    width: 357px;
    height: 40px;
    flex: none;
    box-sizing: border-box;
    display: flex;
    gap: 13px;
    padding: 9px 0 0 11px;
    background: #fff;
    font-size: 14.8px;
    position: relative;
}

.tb-search-icon {
    width: 18px;
    height: 18px;
}

.tb-lemur {
    position: absolute;
    right: 0;
    top: 0;
    width: 68px;
    height: 28px;
}

.tb-apps {
    display: flex;
    margin-left: 4px;
}

.tb-app {
    width: 51.5px;
    height: 40px;
    box-sizing: border-box;
    padding-top: 8px;
    display: flex;
    justify-content: center;
}

.tb-app svg {
    width: 24px;
    height: 24px;
}

.tb-app-on {
    background: #f9b27a;
}

.tray {
    display: flex;
    align-items: flex-start;
    margin-left: 91px;
    white-space: nowrap;
}

.tray-cloud {
    width: 26px;
    height: 18px;
    margin-top: 11px;
}

.tray-temp {
    margin-left: 9px;
    margin-top: 10px;
    font-size: 14px;
}

.tray-caret {
    margin-left: 26px;
}

.tray-icon {
    width: 16px;
    height: 16px;
    margin-top: 13px;
    margin-right: 9px;
}

.tray-lang {
    margin: 13px 0 0 2px;
    font-size: 12px;
}

.tray-clock {
    margin-left: 22px;
    font-size: 12px;
    line-height: 17px;
    text-align: center;
    padding-top: 3px;
}

.tray-notify {
    width: 16px;
    height: 20px;
    margin: 9px 0 0 12px;
}
```
